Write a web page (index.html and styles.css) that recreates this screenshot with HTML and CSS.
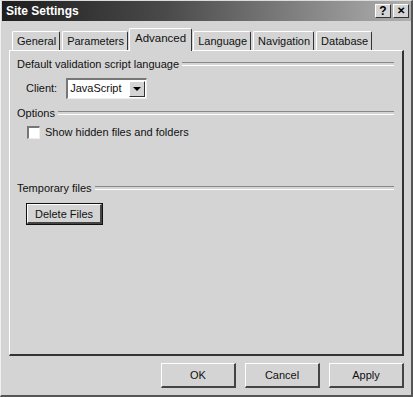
FILE: index.html
```html
<!DOCTYPE html>
<html lang="en">
<head>
  <meta charset="UTF-8">
  <title>Site Settings</title>
  <link rel="stylesheet" href="styles.css">
</head>
<body>
  <div class="window">
    <div class="titlebar">
      <span class="title">Site Settings</span>
      <div class="caption-btns">
        <span class="cap-btn">?</span>
        <span class="cap-btn close">&#x2715;</span>
      </div>
    </div>

    <div class="tabs">
      <span class="tab">General</span>
      <span class="tab">Parameters</span>
      <span class="tab active">Advanced</span>
      <span class="tab">Language</span>
      <span class="tab">Navigation</span>
      <span class="tab">Database</span>
    </div>

    <div class="panel">
      <div class="group-title"><span>Default validation script language</span></div>
      <div class="row client-row">
        <label>Client:</label>
        <div class="select">
          <span class="select-value">JavaScript</span>
          <span class="select-arrow"><span class="tri"></span></span>
        </div>
      </div>

      <div class="group-title"><span>Options</span></div>
      <div class="row check-row">
        <span class="checkbox"></span>
        <span>Show hidden files and folders</span>
      </div>

      <div class="group-title temp"><span>Temporary files</span></div>
      <div class="row">
        <button class="btn default">Delete Files</button>
      </div>
    </div>

    <div class="footer">
      <button class="btn wide">OK</button>
      <button class="btn wide">Cancel</button>
      <button class="btn wide">Apply</button>
    </div>
  </div>
</body>
</html>
```

FILE: styles.css
```css
* {
  margin: 0;
  padding: 0;
  box-sizing: border-box;
}

body {
  width: 413px;
  height: 397px;
  font-family: 'Liberation Sans', Arial, sans-serif;
  font-size: 11px;
  color: #111;
  background: #d4d4d4;
}

.window {
  width: 413px;
  height: 397px;
  display: flex;
  flex-direction: column;
  background: #d4d4d4;
  border-top: 1px solid #dcdcdc;
  border-left: 1px solid #f0f0f0;
  border-right: 2px solid #555;
  border-bottom: 2px solid #555;
}

.titlebar {
  height: 20px;
  margin: 0 0 0 1px;
  display: flex;
  align-items: center;
  justify-content: space-between;
  padding: 0 2px 0 4px;
  background: linear-gradient(90deg, #1e1e1e 0%, #4a4a4a 40%, #b0b0b0 100%);
}

.title {
  color: #fff;
  font-weight: bold;
  font-size: 12px;
}

.caption-btns {
  display: flex;
  gap: 2px;
}

.cap-btn {
  width: 16px;
  height: 14px;
  background: #d4d4d4;
  border-top: 1px solid #fff;
  border-left: 1px solid #fff;
  border-right: 1px solid #333;
  border-bottom: 1px solid #333;
  font-weight: bold;
  font-size: 12px;
  line-height: 12px;
  text-align: center;
  color: #000;
}

.cap-btn.close {
  font-size: 10px;
}

.tabs {
  display: flex;
  align-items: flex-end;
  height: 29px;
  padding-left: 11px;
}

.tab {
  height: 19px;
  padding: 0 3px 0 4px;
  line-height: 18px;
  border-top: 1px solid #fff;
  border-left: 1px solid #fff;
  border-right: 1px solid #333;
  border-radius: 2px 2px 0 0;
  margin-right: 2px;
  color: #111;
}

.tab.active {
  height: 23px;
  line-height: 19px;
  padding: 0 5px;
  margin: 0 1px -1px -1px;
  position: relative;
  z-index: 1;
  background: #d4d4d4;
  font-size: 11.5px;
}

.panel {
  height: 306px;
  margin: 0 7px 0 8px;
  border-top: 1px solid #fff;
  border-left: 1px solid #fff;
  border-right: 2px solid #333;
  border-bottom: 2px solid #333;
  padding: 5px 8px 0 7px;
}

.group-title {
  display: flex;
  align-items: center;
  gap: 3px;
  height: 16px;
}

.group-title::after {
  content: "";
  flex: 1;
  height: 2px;
  border-top: 1px solid #888;
  border-bottom: 1px solid #fff;
}

.group-title.temp {
  margin-top: 37px;
}

.row {
  display: flex;
  align-items: center;
  padding-left: 9px;
}

.client-row {
  gap: 9px;
  height: 26px;
  margin: 3px 0 4px 0;
}

.select {
  width: 81px;
  height: 21px;
  display: flex;
  background: #fff;
  border-top: 2px solid #777;
  border-left: 2px solid #777;
  border-right: 1px solid #eee;
  border-bottom: 1px solid #eee;
}

.select-value {
  flex: 1;
  padding-left: 2px;
  line-height: 17px;
}

.select-arrow {
  width: 16px;
  margin: 1px;
  background: #d4d4d4;
  border-top: 1px solid #fff;
  border-left: 1px solid #fff;
  border-right: 1px solid #333;
  border-bottom: 1px solid #333;
  display: flex;
  align-items: center;
  justify-content: center;
}

.tri {
  width: 0;
  height: 0;
  border-left: 4px solid transparent;
  border-right: 4px solid transparent;
  border-top: 4px solid #000;
}

.check-row {
  gap: 5px;
  height: 22px;
  padding-left: 10px;
}

.checkbox {
  width: 13px;
  height: 13px;
  background: #fff;
  border-top: 2px solid #777;
  border-left: 2px solid #777;
  border-right: 1px solid #eee;
  border-bottom: 1px solid #eee;
}

.btn {
  font-family: 'Liberation Sans', Arial, sans-serif;
  font-size: 11px;
  color: #111;
  background: #d4d4d4;
  border-top: 1px solid #fff;
  border-left: 1px solid #fff;
  border-right: 2px solid #444;
  border-bottom: 2px solid #444;
}

.btn.default {
  margin: 8px 0 0 1px;
  width: 75px;
  height: 20px;
  outline: 1px solid #111;
}

.footer {
  display: flex;
  justify-content: flex-end;
  gap: 9px;
  padding: 7px 7px 7px 0;
}

.btn.wide {
  width: 75px;
  height: 25px;
}
```
